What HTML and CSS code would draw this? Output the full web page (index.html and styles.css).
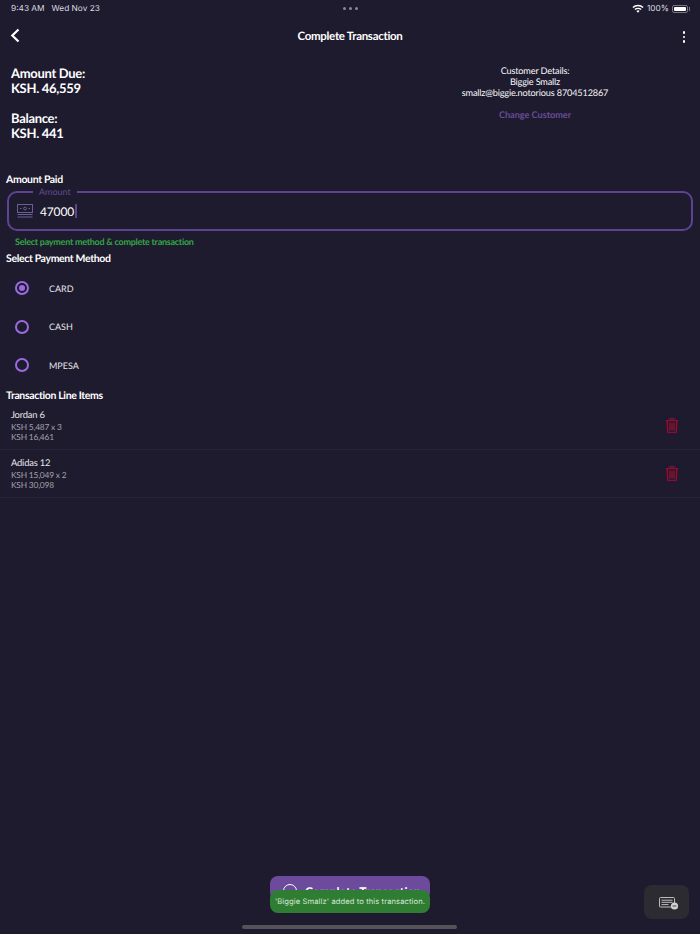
FILE: index.html
```html
<!DOCTYPE html>
<html lang="en">
<head>
    <meta charset="UTF-8">
    <meta name="viewport" content="width=device-width, initial-scale=1.0">
    <title>Complete Transaction</title>
    <link rel="stylesheet" href="styles.css">
</head>
<body>
    <div class="screen">
        <div class="status">
            <div class="status-time"><span>9:43 AM</span><span>Wed Nov 23</span></div>
            <div class="status-dots"><i></i><i></i><i></i></div>
            <div class="status-right">
                <svg width="12" height="9" viewBox="0 0 12 9"><path d="M.4 3.1a8 8 0 0 1 11.2 0l-1 1a6.6 6.6 0 0 0-9.2 0zM2.4 5.1a5.2 5.2 0 0 1 7.2 0l-1 1a3.8 3.8 0 0 0-5.2 0zM4.4 7.1a2.3 2.3 0 0 1 3.2 0L6 8.8z" fill="#fff"/></svg>
                <span>100%</span>
                <div class="battery"><b></b></div>
            </div>
        </div>

        <div class="nav">
            <svg class="nav-back" width="10" height="15" viewBox="0 0 10 15"><path d="M8.5 1.5 2.3 7.5l6.2 6" fill="none" stroke="#fff" stroke-width="2.2"/></svg>
            <div class="nav-title">Complete Transaction</div>
            <div class="nav-more"><i></i><i></i><i></i></div>
        </div>

        <div class="summary">
            <div class="totals">
                <div class="total">Amount Due:<br>KSH. 46,559</div>
                <div class="total">Balance:<br>KSH. 441</div>
            </div>
            <div class="customer">
                <div>Customer Details:</div>
                <div>Biggie Smallz</div>
                <div>smallz@biggie.notorious 8704512867</div>
                <div class="change">Change Customer</div>
            </div>
        </div>

        <h3 class="label label-paid">Amount Paid</h3>
        <div class="field">
            <span class="field-legend">Amount</span>
            <svg width="16" height="14" viewBox="0 0 16 14" fill="none" stroke="#6a5f94"><rect x=".5" y=".5" width="15" height="8"/><circle cx="8" cy="4.5" r="1.4"/><path d="M3 4.5h1.5M11.5 4.5H13M.5 10.5h15M.5 13h15"/></svg>
            <span class="field-value">47000</span><span class="caret"></span>
        </div>
        <div class="hint">Select payment method &amp; complete transaction</div>

        <h3 class="label label-method">Select Payment Method</h3>
        <div class="methods">
            <div class="method"><span class="radio checked"></span>CARD</div>
            <div class="method"><span class="radio"></span>CASH</div>
            <div class="method"><span class="radio"></span>MPESA</div>
        </div>

        <h3 class="label label-items">Transaction Line Items</h3>
        <div class="item">
            <div class="item-text">
                <div class="item-name">Jordan 6</div>
                <div>KSH 5,487 x 3</div>
                <div>KSH 16,461</div>
            </div>
            <svg class="trash" width="12" height="15" viewBox="0 0 12 15" fill="none" stroke="#920e31" stroke-width="1.4"><path d="M0 2.6h12M4 2.4V1.2C4 .7 4.4.6 4.8.6h2.4c.4 0 .8.1.8.6v1.2M1.2 2.6l.5 11c0 .6.4.9.9.9h6.8c.5 0 .9-.3.9-.9l.5-11M4 4.8v7.6M6 4.8v7.6M8 4.8v7.6"/></svg>
        </div>
        <div class="item">
            <div class="item-text">
                <div class="item-name">Adidas 12</div>
                <div>KSH 15,049 x 2</div>
                <div>KSH 30,098</div>
            </div>
            <svg class="trash" width="12" height="15" viewBox="0 0 12 15" fill="none" stroke="#920e31" stroke-width="1.4"><path d="M0 2.6h12M4 2.4V1.2C4 .7 4.4.6 4.8.6h2.4c.4 0 .8.1.8.6v1.2M1.2 2.6l.5 11c0 .6.4.9.9.9h6.8c.5 0 .9-.3.9-.9l.5-11M4 4.8v7.6M6 4.8v7.6M8 4.8v7.6"/></svg>
        </div>

        <!-- bottom overlays -->
        <div class="complete-btn"><span class="complete-ring"></span><span class="complete-text">Complete Transaction</span></div>
        <div class="toast">'Biggie Smallz' added to this transaction.</div>
        <div class="kbd-btn">
            <svg width="20" height="14" viewBox="0 0 20 14" fill="none" stroke="#bdbdbd"><rect x=".5" y=".5" width="15" height="9.5" rx="1"/><path d="M2.5 3.2h11M2.5 5.3h11M2.5 7.6h7"/><circle cx="15.5" cy="9" r="3.6" fill="#d0d0d0" stroke="none"/><path d="M13.6 9h3.8" stroke="#444"/></svg>
        </div>
        <div class="home-bar"></div>
    </div>
</body>
</html>
```

FILE: styles.css
```css
*{
    box-sizing:border-box;
}
html,body{
    margin:0;
    padding:0;
}
body{
    background:#1e1b2e;
    color:#fff;
    font-family:"Lato","Noto Sans",sans-serif;
    text-rendering:geometricPrecision;
}
.screen{
    position:relative;
    width:700px;
    height:934px;
    overflow:hidden;
}

/* status bar */
.status{
    height:16px;
    padding:1px 11px 0;
    display:flex;
    align-items:center;
    justify-content:space-between;
    font-size:8.3px;
    color:#dcdce0;
    font-family:"Inter",sans-serif;
}
.status-time{
    display:flex;
    gap:7px;
    width:200px;
    margin-top:1px;
}
.status-dots{
    display:flex;
    gap:3px;
}
.status-dots i{
    width:3px;
    height:3px;
    border-radius:50%;
    background:#8b8992;
}
.status-right{
    width:200px;
    display:flex;
    justify-content:flex-end;
    align-items:center;
    gap:3px;
}
.battery{
    position:relative;
    width:16px;
    height:8px;
    padding:1px;
    border:1px solid #77757f;
    border-radius:2px;
    margin-right:1px;
}
.battery:after{
    content:"";
    position:absolute;
    right:-3px;
    top:1px;
    width:1px;
    height:4px;
    background:#77757f;
}
.battery b{
    display:block;
    height:100%;
    background:#fff;
    border-radius:1px;
}

/* nav */
.nav{
    position:relative;
    height:40px;
    padding-top:1px;
    display:flex;
    align-items:center;
    justify-content:center;
}
.nav-back{
    position:absolute;
    left:10px;
    top:12px;
}
.nav-title{
    font-size:11.5px;
    font-weight:700;
    letter-spacing:-.3px;
}
.nav-more{
    position:absolute;
    right:15px;
    top:15px;
    display:flex;
    flex-direction:column;
    gap:2px;
}
.nav-more i{
    width:2.5px;
    height:2.5px;
    background:#fff;
    border-radius:50%;
}

/* summary */
.summary{
    display:flex;
    height:118px;
    padding-top:10px;
}
.totals{
    width:370px;
    padding-left:11px;
}
.total{
    font-size:13px;
    font-weight:700;
    line-height:15px;
    margin-bottom:15px;
    letter-spacing:-.3px;
}
.customer{
    width:330px;
    margin-top:-1px;
    text-align:center;
    font-size:9.2px;
    line-height:11px;
    letter-spacing:-.18px;
    color:#f6f6f8;
}
.change{
    margin-top:11px;
    color:#684c98;
    font-weight:700;
    font-size:9.2px;
    letter-spacing:-.05px;
}

/* form */
.label{
    margin:0;
    padding-left:6px;
    font-size:10.5px;
    line-height:13px;
    font-weight:700;
    letter-spacing:-.35px;
}
.field{
    position:relative;
    height:40px;
    margin:4px 7px 0;
    padding-left:8px;
    border:2px solid #5e4391;
    border-radius:10px;
    display:flex;
    align-items:center;
}
.field-legend{
    position:absolute;
    left:24px;
    top:-7px;
    padding:0 6px;
    background:#1e1b2e;
    font-size:9px;
    line-height:11px;
    color:#614a94;
}
.field-value{
    margin-left:7px;
    font-size:12px;
    letter-spacing:-.15px;
    color:#fff;
}
.caret{
    width:1.5px;
    height:14px;
    margin-left:1px;
    background:#5e4391;
}
.hint{
    margin:5px 0 6px 15px;
    font-size:9px;
    line-height:11px;
    letter-spacing:-.26px;
    color:#33a546;
    font-weight:700;
}
.methods{
    padding-top:3px;
}
.method{
    height:38.5px;
    padding-left:15px;
    display:flex;
    align-items:center;
    font-size:9px;
    color:#e6e6ea;
}
.radio{
    width:14px;
    height:14px;
    margin-right:20px;
    border:2px solid #9a6be0;
    border-radius:50%;
}
.radio.checked{
    padding:2px;
    background:#9a6be0;
    background-clip:content-box;
}
.label-items{
    margin:5px 0 -1px;
}

/* line items */
.item{
    height:48px;
    padding:0 22px 0 11px;
    border-bottom:1px solid #27243a;
    display:flex;
    align-items:center;
    justify-content:space-between;
}
.item-text{
    padding-top:2px;
    font-size:8.4px;
    line-height:10.5px;
    letter-spacing:-.2px;
    color:#a2a1aa;
}
.item-name{
    font-size:9.4px;
    line-height:12px;
    letter-spacing:-.2px;
    color:#e6e6ea;
}

/* bottom */
.complete-btn{
    position:absolute;
    left:270px;
    top:876px;
    width:160px;
    height:24px;
    padding:8px 0 0 13px;
    display:flex;
    gap:8px;
    background:#6c4b9c;
    border-radius:8px;
    overflow:hidden;
}
.complete-text{
    font-size:12px;
    font-weight:700;
    line-height:16px;
    white-space:nowrap;
}
.complete-ring{
    flex:none;
    width:14px;
    height:14px;
    border:1.5px solid #fff;
    border-radius:50%;
}
.toast{
    position:absolute;
    left:270px;
    top:890px;
    width:160px;
    height:23px;
    background:#2e7d32;
    border-radius:8px;
    text-align:center;
    font-family:"Inter",sans-serif;
    font-size:7.6px;
    line-height:23px;
    letter-spacing:.1px;
    color:#d8e6d8;
    white-space:nowrap;
}
.kbd-btn{
    position:absolute;
    left:644px;
    top:885px;
    width:45px;
    height:34px;
    padding:4px 0 0 5px;
    background:#2d2b32;
    border-radius:8px;
    display:flex;
    align-items:center;
    justify-content:center;
}
.home-bar{
    position:absolute;
    left:242px;
    top:925px;
    width:215px;
    height:4px;
    border-radius:2px;
    background:#545357;
}
```
